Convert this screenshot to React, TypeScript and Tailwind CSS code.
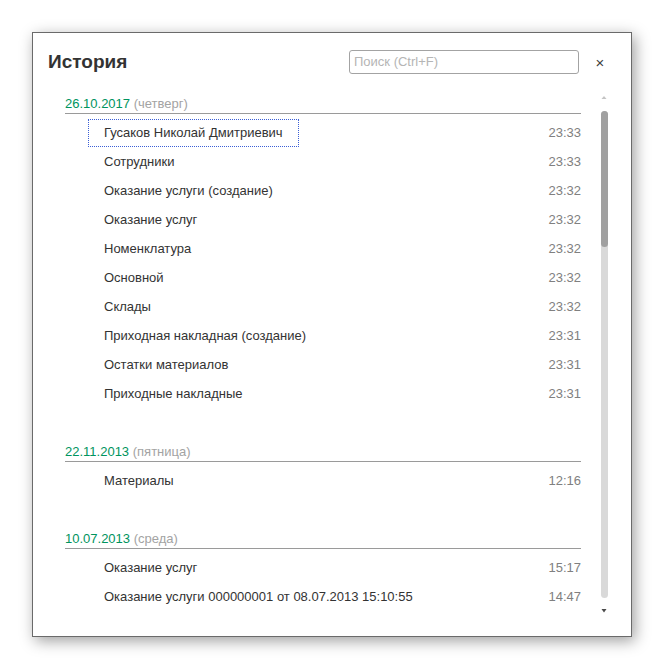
import React from "react";

type Entry = { title: string; time: string };
type Group = { date: string; weekday: string; entries: Entry[] };

const groups: Group[] = [
  {
    date: "26.10.2017",
    weekday: "четверг",
    entries: [
      { title: "Гусаков Николай Дмитриевич", time: "23:33" },
      { title: "Сотрудники", time: "23:33" },
      { title: "Оказание услуги (создание)", time: "23:32" },
      { title: "Оказание услуг", time: "23:32" },
      { title: "Номенклатура", time: "23:32" },
      { title: "Основной", time: "23:32" },
      { title: "Склады", time: "23:32" },
      { title: "Приходная накладная (создание)", time: "23:31" },
      { title: "Остатки материалов", time: "23:31" },
      { title: "Приходные накладные", time: "23:31" },
    ],
  },
  {
    date: "22.11.2013",
    weekday: "пятница",
    entries: [{ title: "Материалы", time: "12:16" }],
  },
  {
    date: "10.07.2013",
    weekday: "среда",
    entries: [
      { title: "Оказание услуг", time: "15:17" },
      { title: "Оказание услуги 000000001 от 08.07.2013 15:10:55", time: "14:47" },
    ],
  },
];

export default function App() {
  return (
    <div className="h-[669px] w-[664px] bg-white pl-[32px] pt-[32px] font-['Liberation_Sans',Arial,sans-serif]">
      <div className="flex h-[605px] w-[600px] flex-col overflow-hidden border border-[#6a6a6a] bg-white shadow-[3px_4px_14px_rgba(0,0,0,0.38)]">
        {/* header */}
        <div className="flex items-center pl-[15px] pt-[17px]">
          <h1 className="w-[301px] text-[19px] font-bold leading-[24px] text-[#333333]">История</h1>
          <div className="flex h-[24px] w-[230px] items-center rounded-[3px] border border-[#a3a3a3] px-[4px] text-[13px] text-[#b5b5b5]">
            Поиск (Ctrl+F)
          </div>
          <button className="flex w-[42px] items-center justify-center text-[15px] leading-none text-[#404040]">
            ×
          </button>
        </div>

        {/* body */}
        <div className="flex min-h-0 flex-1 pt-[21px]">
          <div className="w-[548px] pl-[32px]">
            {groups.map((g, gi) => (
              <div key={g.date} className={gi < groups.length - 1 ? "mb-[35px]" : ""}>
                <div className="border-b border-[#9a9a9a] pb-[1px] text-[13px] leading-[17px]">
                  <span className="text-[#00945e]">{g.date}</span>{" "}
                  <span className="text-[#a3a3a3]">({g.weekday})</span>
                </div>
                <div className="mt-[4px]">
                  {g.entries.map((e, i) => (
                    <div key={i} className="flex h-[29px] items-center justify-between text-[13px] leading-[16px]">
                      <span
                        className={
                          "ml-[23px] flex h-[28px] items-center border px-[15px] text-[#333333] " +
                          (gi === 0 && i === 0 ? "border-dotted border-[#3b5fd6]" : "border-transparent")
                        }
                      >
                        {e.title}
                      </span>
                      <span className="text-[#808080]">{e.time}</span>
                    </div>
                  ))}
                </div>
              </div>
            ))}
          </div>

          {/* scrollbar */}
          <div className="ml-[19px] flex w-[8px] flex-col items-center">
            <svg width="8" height="6" viewBox="0 0 8 6" className="mt-[-1px]">
              <path d="M1.5 5 L4 2 L6.5 5 Z" fill="#c4c4c4" />
            </svg>
            <div className="mt-[11px] flex h-[487px] w-[7px] flex-col rounded-full bg-[#d9d9d9]">
              <div className="h-[136px] w-full rounded-full bg-[#a0a0a0]" />
            </div>
            <svg width="8" height="6" viewBox="0 0 8 6" className="mt-[10px]">
              <path d="M1.5 1 L4 4.5 L6.5 1 Z" fill="#4a4a4a" />
            </svg>
          </div>
        </div>
      </div>
    </div>
  );
}
